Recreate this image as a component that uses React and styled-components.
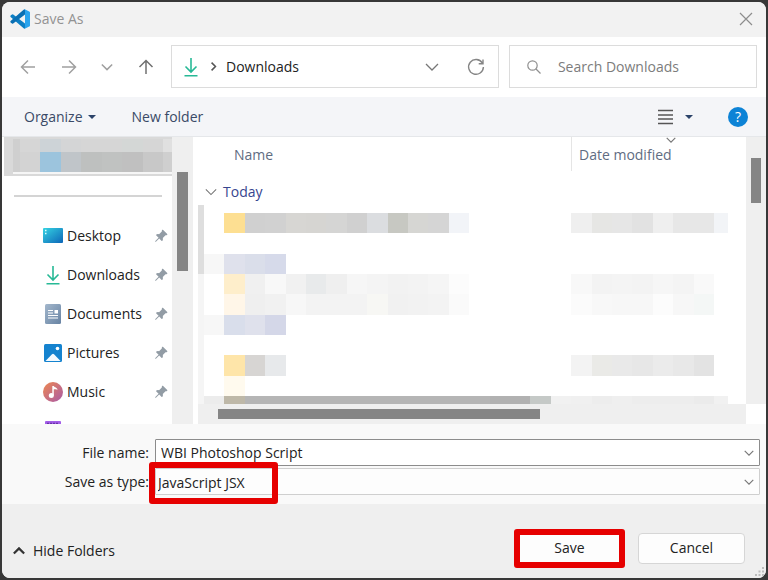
import { useState } from "react";
import styled, { createGlobalStyle } from "styled-components";
import { BsPinAngleFill } from "react-icons/bs";

const places = [
  { name: "Desktop", icon: "desktop" },
  { name: "Downloads", icon: "downloads" },
  { name: "Documents", icon: "documents" },
  { name: "Pictures", icon: "pictures" },
  { name: "Music", icon: "music" },
];

// hidden account name, top and bottom row of tiles
const accountTiles = [
  ["#cfcfcf", "#d6d6d6", "#cdd3d7", "#d4d5d6", "#d6d6d6", "#d6d6d6", "#d4d7d6", "#d6d6d6", "#e0e0e0"],
  ["#cfcfcf", "#d3d3d3", "#9cc4dd", "#c0c5c9", "#bec0bf", "#c0c2c1", "#c0c0c0", "#c8c8c8", "#cfcfcf"],
];

// hidden file rows: first column is the gutter, then name tiles and date tiles
const fileTiles = [
  {
    name: ["#fddf92", "#d0d0d0", "#d1d1d1", "#d7d6d3", "#d6d5d2", "#d5d5d4", "#d0d0d0", "#dbdde0", "#c7c8c2", "#d6d6d3", "#d5d5d5", "#f2f4f8"],
    date: ["#efefef", "#e6e6e4", "#e6e6e6", "#e2e2e2", "#efefef", "#e7e7e7", "#e7e7e7", "#f2f4f7"],
  },
  {},
  { gutter: "#f7f7f7", name: ["#dfe1ec", "#dadeea", "#d6daea"] },
  {
    name: ["#feeecb", "#f0f0f0", "#f8f8f8", "#f1f1f1", "#e8eaeb", "#efefef", "#f6f6f6", "#f4f4f4", "#f2f2f2", "#f3f3f3", "#f5f5f5", "#fcfcfc"],
    date: ["#f8f8f8", "#f3f3f3", "#f4f4f4", "#f3f3f3", "#f6f6f6", "#f4f4f4", "#f9f9f9"],
  },
  {
    name: ["#fff6e8", "#efefef", "#f1f1f1", "#f7f7f7", "#f3f3f3", "#f3f3f3", "#f3f3f3", "#f7f7f4", "#f1f1f1", "#f2f2f2", "#f3f3f3", "#fafafa"],
    date: ["#fbfbfb", "#f8f8f8", "#f7f7f7", "#f7f7f7", "#fcfcfc", "#f7f7f7", "#f4f7f6"],
  },
  { gutter: "#f7f7f7", name: ["#d9deeb", "#dfe1ec", "#d4d7e8"] },
  {},
  {
    name: ["#fee5a9", "#d7d5d3", "#e7e9eb"],
    date: ["#f3f3f3", "#eaeae7", "#e9e9e9", "#e7e7e7", "#ebebeb", "#e8e8e8", "#e3e3e3"],
  },
  { name: ["#fffaee"] },
  {
    gutter: "#ececec",
    name: ["#beb8a8", ...Array(12).fill("#b5b5b5"), "#b1b1b1", "#b1b1b1", "#c5c9c7", "#f1f1f1"],
    date: ["#f0f0f0", "#ededed", "#efefef", "#ededed", "#ededed", "#ededed", "#ebebeb", "#f1f1f1"],
  },
];

const Chevron = ({ size = 14, color = "#777", rotate = 0, weight = 1.3 }) => (
  <svg width={size} height={size} viewBox="0 0 14 14" fill="none" stroke={color} strokeWidth={weight} transform={`rotate(${rotate})`}>
    <path d="M1 4l6 6 6-6" />
  </svg>
);

const Arrow = ({ color, rotate = 0, size = 16 }) => (
  <svg width={size} height={size} viewBox="0 0 16 16" fill="none" stroke={color} strokeWidth="1.5" transform={`rotate(${rotate})`}>
    <path d="M15 8H1.5M8 1.5L1.5 8 8 14.5" />
  </svg>
);

const DownloadIcon = () => (
  <svg width="20" height="20" viewBox="0 0 20 20" fill="none" stroke="#27b996" strokeWidth="1.6">
    <path d="M10 1v14M4.5 9.5L10 15l5.500-5.500M3.500 18.700h13" />
  </svg>
);

const PlaceIcon = ({ name }) => {
  switch (name) {
    case "downloads":
      return <DownloadIcon />;
    case "desktop":
      return (
        <svg width="20" height="20" viewBox="0 0 20 20">
          <defs>
            <linearGradient id="desk" x1="0" y1="0" x2="1" y2="1">
              <stop offset="0" stopColor="#35d3e2" />
              <stop offset="1" stopColor="#0d66b8" />
            </linearGradient>
          </defs>
          <rect y="2" width="20" height="15" rx="1" fill="url(#desk)" />
          <path d="M2 3.700h1.500v1.500H2zM2 6.700h1.500v1.500H2z" fill="#d9ffff" />
        </svg>
      );
    case "documents":
      return (
        <svg width="20" height="20" viewBox="0 0 20 20">
          <defs>
            <linearGradient id="doc" x1="0" y1="0" x2="1" y2="1">
              <stop offset="0" stopColor="#a3b7cc" />
              <stop offset="1" stopColor="#6783a3" />
            </linearGradient>
          </defs>
          <rect x="2" width="16" height="20" rx="1.500" fill="url(#doc)" />
          <path d="M5 6.500h5M5 9h5M5 11.500h10M5 14h10" stroke="#fff" strokeWidth="1.200" />
          <path d="M11.500 6h3.500v3.500h-3.500z" fill="#fff" />
        </svg>
      );
    case "pictures":
      return (
        <svg width="20" height="20" viewBox="0 0 20 20">
          <rect x="1" y="1" width="18" height="18" rx="1.500" fill="#1583cf" />
          <path d="M2.500 18L9 11.200q1-1 2 0l6.500 6.800z" fill="#f4faff" />
          <circle cx="14.500" cy="5.500" r="1.800" fill="#fff" />
        </svg>
      );
    case "music":
      return (
        <svg width="20" height="20" viewBox="0 0 20 20">
          <defs>
            <linearGradient id="music" x1="0" y1="0" x2="1" y2="1">
              <stop offset="0" stopColor="#ee8850" />
              <stop offset="1" stopColor="#a95aa8" />
            </linearGradient>
          </defs>
          <circle cx="10" cy="10" r="10" fill="url(#music)" />
          <circle cx="8.300" cy="13.500" r="2.500" fill="#fff" />
          <path d="M9.300 13.500V4h1.500c.5 1.500 3.700 1.400 3.700 3.800-1.200-.6-2.500-.6-3.700-.6v6.300z" fill="#fff" />
        </svg>
      );
    default:
      return (
        <svg width="20" height="20" viewBox="0 0 20 20">
          <rect x="2" y="0" width="16" height="19" rx="1" fill="#a35ee8" />
          <path d="M4 2.500h12" stroke="#6a32a8" strokeWidth="1.500" strokeDasharray="2 1" />
        </svg>
      );
  }
};

const CodeLogo = () => (
  <svg width="20" height="20" viewBox="0 0 100 100">
    <path d="M3 33l7-6q3-2 6 0l59 46v25q-4 1-7-2L3 40q-3-3 0-7z" fill="#0d7fc4" />
    <path d="M3 67l7 6q3 2 6 0l59-46V2q-4-1-7 2L3 60q-3 3 0 7z" fill="#0a6fb3" />
    <path d="M70 98q3 1 6 0l20-10q4-2 4-6V18q0-4-4-6L76 2q-3-1-6 1 5-1 5 4v86q0 5-5 5z" fill="#2aa4ee" />
  </svg>
);

export default function App() {
  const [fileName, setFileName] = useState("WBI Photoshop Script");

  return (
    <Screen>
      <GlobalStyle />
      <Dialog>
        <TitleBar>
          <CodeLogo />
          <Title>Save As</Title>
          <IconButton aria-label="Close">
            <svg width="14" height="14" viewBox="0 0 14 14" stroke="#8d8d8d" strokeWidth="1.200">
              <path d="M1 1l12 12M13 1L1 13" />
            </svg>
          </IconButton>
        </TitleBar>

        <NavBar>
          <NavButtons>
            <IconButton aria-label="Back">
              <Arrow color="#a0a0a0" />
            </IconButton>
            <IconButton aria-label="Forward">
              <Arrow color="#a0a0a0" rotate={180} />
            </IconButton>
            <IconButton aria-label="Recent locations">
              <Chevron size={12} color="#a0a0a0" weight={1.8} />
            </IconButton>
            <IconButton aria-label="Up">
              <Arrow color="#707070" rotate={90} />
            </IconButton>
          </NavButtons>
          <Address>
            <DownloadIcon />
            <Chevron size={9} color="#555" rotate={-90} weight={2.4} />
            <Crumb>Downloads</Crumb>
            <IconButton aria-label="Previous locations">
              <Chevron />
            </IconButton>
            <IconButton aria-label="Refresh">
              <svg width="18" height="18" viewBox="0 0 18 18" fill="none" stroke="#858585" strokeWidth="1.400">
                <path d="M15.300 5A7.400 7.400 0 1 0 16.400 9M16 1.500v4.300h-4.300" />
              </svg>
            </IconButton>
          </Address>
          <Search>
            <svg width="14" height="14" viewBox="0 0 14 14" fill="none" stroke="#909090" strokeWidth="1.200">
              <circle cx="5.500" cy="5.500" r="4.700" />
              <path d="M9 9l4.500 4.500" />
            </svg>
            <SearchInput aria-label="Search Downloads" placeholder="Search Downloads" />
          </Search>
        </NavBar>

        <Toolbar>
          <ToolButton>
            Organize
            <Caret />
          </ToolButton>
          <ToolButton>New folder</ToolButton>
          <ViewButton aria-label="Change view">
            <svg width="16" height="16" viewBox="0 0 16 16" stroke="#555" strokeWidth="1.300">
              <path d="M0 1.500h15M0 6h15M0 10h15M0 14.500h15" />
            </svg>
            <Caret />
          </ViewButton>
          <HelpButton aria-label="Help">?</HelpButton>
        </Toolbar>

        <Browser>
          <Sidebar>
            <Account>
              {accountTiles.map((row, r) => (
                <AccountRow key={r} $tall={r === 1}>
                  {row.map((color, i) => (
                    <Tile key={i} $color={color} />
                  ))}
                </AccountRow>
              ))}
            </Account>
            <Divider />
            <Places>
              {places.map((place) => (
                <Place key={place.name}>
                  <PlaceIcon name={place.icon} />
                  <PlaceLink href="#">{place.name}</PlaceLink>
                  <BsPinAngleFill size={14} color="#929ca5" />
                </Place>
              ))}
              <Place>
                <PlaceLink href="#" aria-label="Videos">
                  <PlaceIcon name="videos" />
                </PlaceLink>
              </Place>
            </Places>
          </Sidebar>
          <SideTrack>
            <SideThumb />
          </SideTrack>

          <Files>
            <FilesTop>
              <FileList>
                <Columns>
                  <NameColumn>Name</NameColumn>
                  <DateColumn>
                    Date modified
                    <SortMark>
                      <Chevron size={10} weight={1.6} />
                    </SortMark>
                  </DateColumn>
                </Columns>
                <ListBody>
                  <Rail />
                  <Group>
                    <GroupTitle>
                      <Chevron size={12} />
                      Today
                    </GroupTitle>
                    <Rows>
                      {fileTiles.map((row, r) => (
                        <Row key={r}>
                          <Tile $color={row.gutter} />
                          {row.name?.map((color, i) => (
                            <Tile key={`n${i}`} $color={color} />
                          ))}
                          {row.date?.map((color, i) => (
                            <Tile key={`d${i}`} $color={color} $column={i + 19} />
                          ))}
                        </Row>
                      ))}
                    </Rows>
                  </Group>
                </ListBody>
              </FileList>
              <FileTrack>
                <FileThumb />
              </FileTrack>
            </FilesTop>
            <BottomTrack>
              <BottomThumb />
            </BottomTrack>
          </Files>
        </Browser>

        <Form>
          <Label htmlFor="file-name">File name:</Label>
          <Field>
            <NameInput id="file-name" value={fileName} onChange={(e) => setFileName(e.target.value)} />
            <FieldArrow>
              <Chevron size={10} weight={1.6} />
            </FieldArrow>
          </Field>
          <Label htmlFor="file-type">Save as type:</Label>
          <Field>
            <TypeSelect id="file-type">
              <option>JavaScript JSX</option>
            </TypeSelect>
            <FieldArrow>
              <Chevron size={10} weight={1.6} />
            </FieldArrow>
            <Marker />
          </Field>
        </Form>

        <Footer>
          <HideButton>
            <Chevron size={12} color="#333" rotate={180} weight={2.6} />
            Hide Folders
          </HideButton>
          <SaveButton>Save</SaveButton>
          <CancelButton>Cancel</CancelButton>
          <Grip>
            <svg width="10" height="10" viewBox="0 0 10 10" fill="#bdbdbd">
              <path d="M7 0h2v2H7zM7 3.500h2v2H7zM3.500 3.500h2v2h-2zM7 7h2v2H7zM3.500 7h2v2h-2zM0 7h2v2H0z" />
            </svg>
          </Grip>
        </Footer>
      </Dialog>
    </Screen>
  );
}

const GlobalStyle = createGlobalStyle`
  * {
    box-sizing: border-box;
  }
  body {
    margin: 0;
    background-color: #383838;
  }
  body, button, input, select {
    font-family: "Open Sans", "Noto Sans", sans-serif;
    font-size: 14px;
    line-height: 20px;
    color: #222;
  }
  button {
    padding: 0;
    border: none;
    background: none;
  }
  svg {
    display: block;
    flex-shrink: 0;
  }
`;

const Screen = styled.div`
  height: 100vh;
  padding: 2px;
`;
const Dialog = styled.div`
  height: 100%;
  display: flex;
  flex-direction: column;
  border-radius: 8px;
  overflow: hidden;
  background-color: white;
`;
const TitleBar = styled.header`
  height: 35px;
  flex-shrink: 0;
  display: flex;
  align-items: center;
  gap: 4px;
  padding: 0 13px 2px 8px;
  background-color: #f2f2f2;
`;
const Title = styled.div`
  flex-grow: 1;
  color: #929292;
`;
const IconButton = styled.button`
  display: flex;
  align-items: center;
  justify-content: center;
`;

const NavBar = styled.nav`
  flex-shrink: 0;
  display: flex;
  gap: 10px;
  padding: 8px 9px 9px 18px;
`;
const NavButtons = styled.div`
  display: flex;
  align-items: center;
  justify-content: space-between;
  width: 134px;
  margin-right: 7px;
`;
const Address = styled.div`
  flex: 43;
  display: flex;
  align-items: center;
  gap: 8px;
  height: 43px;
  padding: 0 13px 0 9px;
  border: 1px solid #dcdcdc;

  ${IconButton} + ${IconButton} {
    margin-left: 20px;
  }
`;
const Crumb = styled.div`
  flex-grow: 1;
`;
const Search = styled.div`
  flex: 30;
  display: flex;
  align-items: center;
  gap: 17px;
  height: 43px;
  padding: 0 17px;
  border: 1px solid #dcdcdc;
`;
const SearchInput = styled.input`
  flex: 1;
  min-width: 0;
  padding: 0;
  border: none;
  outline: none;

  &::placeholder {
    color: #7c7c7c;
  }
`;

const Toolbar = styled.div`
  flex-shrink: 0;
  display: flex;
  align-items: center;
  height: 40px;
  padding: 0 18px 0 22px;
  border-bottom: 1px solid #e5e7ea;
  background-color: #f4f5f8;
`;
const ToolButton = styled.button`
  display: flex;
  align-items: center;
  gap: 5px;
  margin-right: 36px;
  color: #3a4a67;
`;
const Caret = styled.span`
  border: 4px solid transparent;
  border-top-color: #2b4369;
  border-bottom: none;
`;
const ViewButton = styled.button`
  display: flex;
  align-items: center;
  gap: 11px;
  margin: 0 35px 0 auto;
`;
const HelpButton = styled.button`
  width: 20px;
  height: 20px;
  border-radius: 50%;
  background-color: #0d83d6;
  color: white;
`;

const Browser = styled.div`
  flex: 1;
  min-height: 0;
  display: flex;
`;
const Sidebar = styled.aside`
  width: 170px;
  flex-shrink: 0;
  overflow: hidden;
`;
const Account = styled.div`
  height: 39px;
  margin-left: 2px;
  padding: 2px 0 0 9px;
  background-color: #d9d9d9;
`;
const AccountRow = styled.div`
  display: grid;
  grid-template-columns: 7px repeat(7, 1fr) 9px;
  height: ${({ $tall }) => ($tall ? 22 : 13)}px;
  border-bottom: ${({ $tall }) => $tall && "2px solid #f6f6f6"};
`;
const Tile = styled.div`
  background-color: ${({ $color }) => $color};
  grid-column: ${({ $column }) => $column};
`;
const Divider = styled.div`
  height: 2px;
  margin: 19px 10px 19px 12px;
  background-color: #d4d4d4;
`;
const Places = styled.ul`
  margin: 0;
  padding: 0;
  list-style: none;
`;
const Place = styled.li`
  display: flex;
  align-items: center;
  gap: 4px;
  height: 39px;
  padding: 0 4px 0 41px;
`;
const PlaceLink = styled.a`
  flex-grow: 1;
  color: #222;
  text-decoration: none;
`;
const SideTrack = styled.div`
  width: 21px;
  flex-shrink: 0;
  padding: 35px 5px 0;
  background-color: #efefef;
`;
const SideThumb = styled.div`
  height: 99px;
  background-color: #858585;
`;

const Files = styled.main`
  flex: 1;
  min-width: 0;
  display: flex;
  flex-direction: column;
  padding-left: 5px;
`;
const FilesTop = styled.div`
  flex: 1;
  min-height: 0;
  display: flex;
`;
const FileList = styled.div`
  flex: 1;
  display: flex;
  flex-direction: column;
`;
const Columns = styled.div`
  display: flex;
  height: 34px;
  color: #5f6c82;
`;
const NameColumn = styled.div`
  flex: 1;
  padding: 8px 0 0 36px;
`;
const DateColumn = styled.div`
  position: relative;
  width: 175px;
  padding: 8px 0 0 7px;
  border-left: 1px solid #e5e5e5;
`;
const SortMark = styled.span`
  position: absolute;
  top: -2px;
  left: 94px;
`;
const ListBody = styled.div`
  flex: 1;
  display: flex;
`;
const Rail = styled.div`
  width: 6px;
  margin-top: 34px;
  background: linear-gradient(#dedede 69px, #f5f5f5 69px);
`;
const Group = styled.section`
  flex: 1;
  display: flex;
  flex-direction: column;
`;
const GroupTitle = styled.div`
  display: flex;
  align-items: center;
  gap: 6px;
  height: 42px;
  padding-left: 1px;
  color: #37458f;
`;
const Rows = styled.div`
  flex: 1;
  display: grid;
  grid-template-rows: repeat(9, 1fr) 8px;
  margin-right: 18px;
`;
const Row = styled.div`
  display: grid;
  grid-template-columns: repeat(25, 1fr) 14px;
`;
const FileTrack = styled.div`
  width: 20px;
  padding: 21px 5px 0;
  background-color: #efefef;
`;
const FileThumb = styled.div`
  height: 45px;
  background-color: #858585;
`;
const BottomTrack = styled.div`
  height: 20px;
  margin-right: 20px;
  padding: 5px 17px 5px 20px;
  background-color: #efefef;
`;
const BottomThumb = styled.div`
  width: 63%;
  height: 10px;
  background-color: #858585;
`;

const Form = styled.div`
  flex-shrink: 0;
  display: grid;
  grid-template-columns: 147px 1fr;
  column-gap: 6px;
  row-gap: 2px;
  align-items: center;
  padding: 15px 6px 9px 0;
  background-color: #f9f9f9;
`;
const Label = styled.label`
  padding-top: 1px;
  text-align: right;
`;
const Field = styled.div`
  position: relative;
  display: flex;
`;
const NameInput = styled.input`
  flex: 1;
  height: 27px;
  padding: 0 24px 0 5px;
  border: 1px solid #8c8c8c;
  border-radius: 1px;
  outline: none;
  background-color: white;
`;
const TypeSelect = styled.select`
  flex: 1;
  height: 27px;
  padding: 2px 24px 0 2px;
  border: 1px solid #cfcfcf;
  border-radius: 1px;
  appearance: none;
  background-color: #fdfdfd;
`;
const FieldArrow = styled.span`
  position: absolute;
  top: 9px;
  right: 6px;
  pointer-events: none;
`;
const Marker = styled.span`
  position: absolute;
  top: -6px;
  left: -6px;
  width: 129px;
  height: 42px;
  border: 6px solid #e60000;
  border-radius: 3px;
  pointer-events: none;
`;

const Footer = styled.footer`
  position: relative;
  flex-shrink: 0;
  display: flex;
  align-items: center;
  height: 74px;
  padding: 14px 21px 0 11px;
  background-color: #efefef;
`;
const HideButton = styled.button`
  display: flex;
  align-items: center;
  gap: 8px;
  margin: 6px auto 0 0;
`;
const SaveButton = styled.button`
  width: 111px;
  height: 39px;
  margin-right: 13px;
  border: 6px solid #e60000;
  border-radius: 3px;
  background-color: #fdfdfd;
`;
const CancelButton = styled.button`
  width: 107px;
  height: 31px;
  border: 1px solid #d6d6d6;
  border-radius: 4px;
  background-color: #fdfdfd;
`;
const Grip = styled.span`
  position: absolute;
  right: 1px;
  bottom: 1px;
`;
